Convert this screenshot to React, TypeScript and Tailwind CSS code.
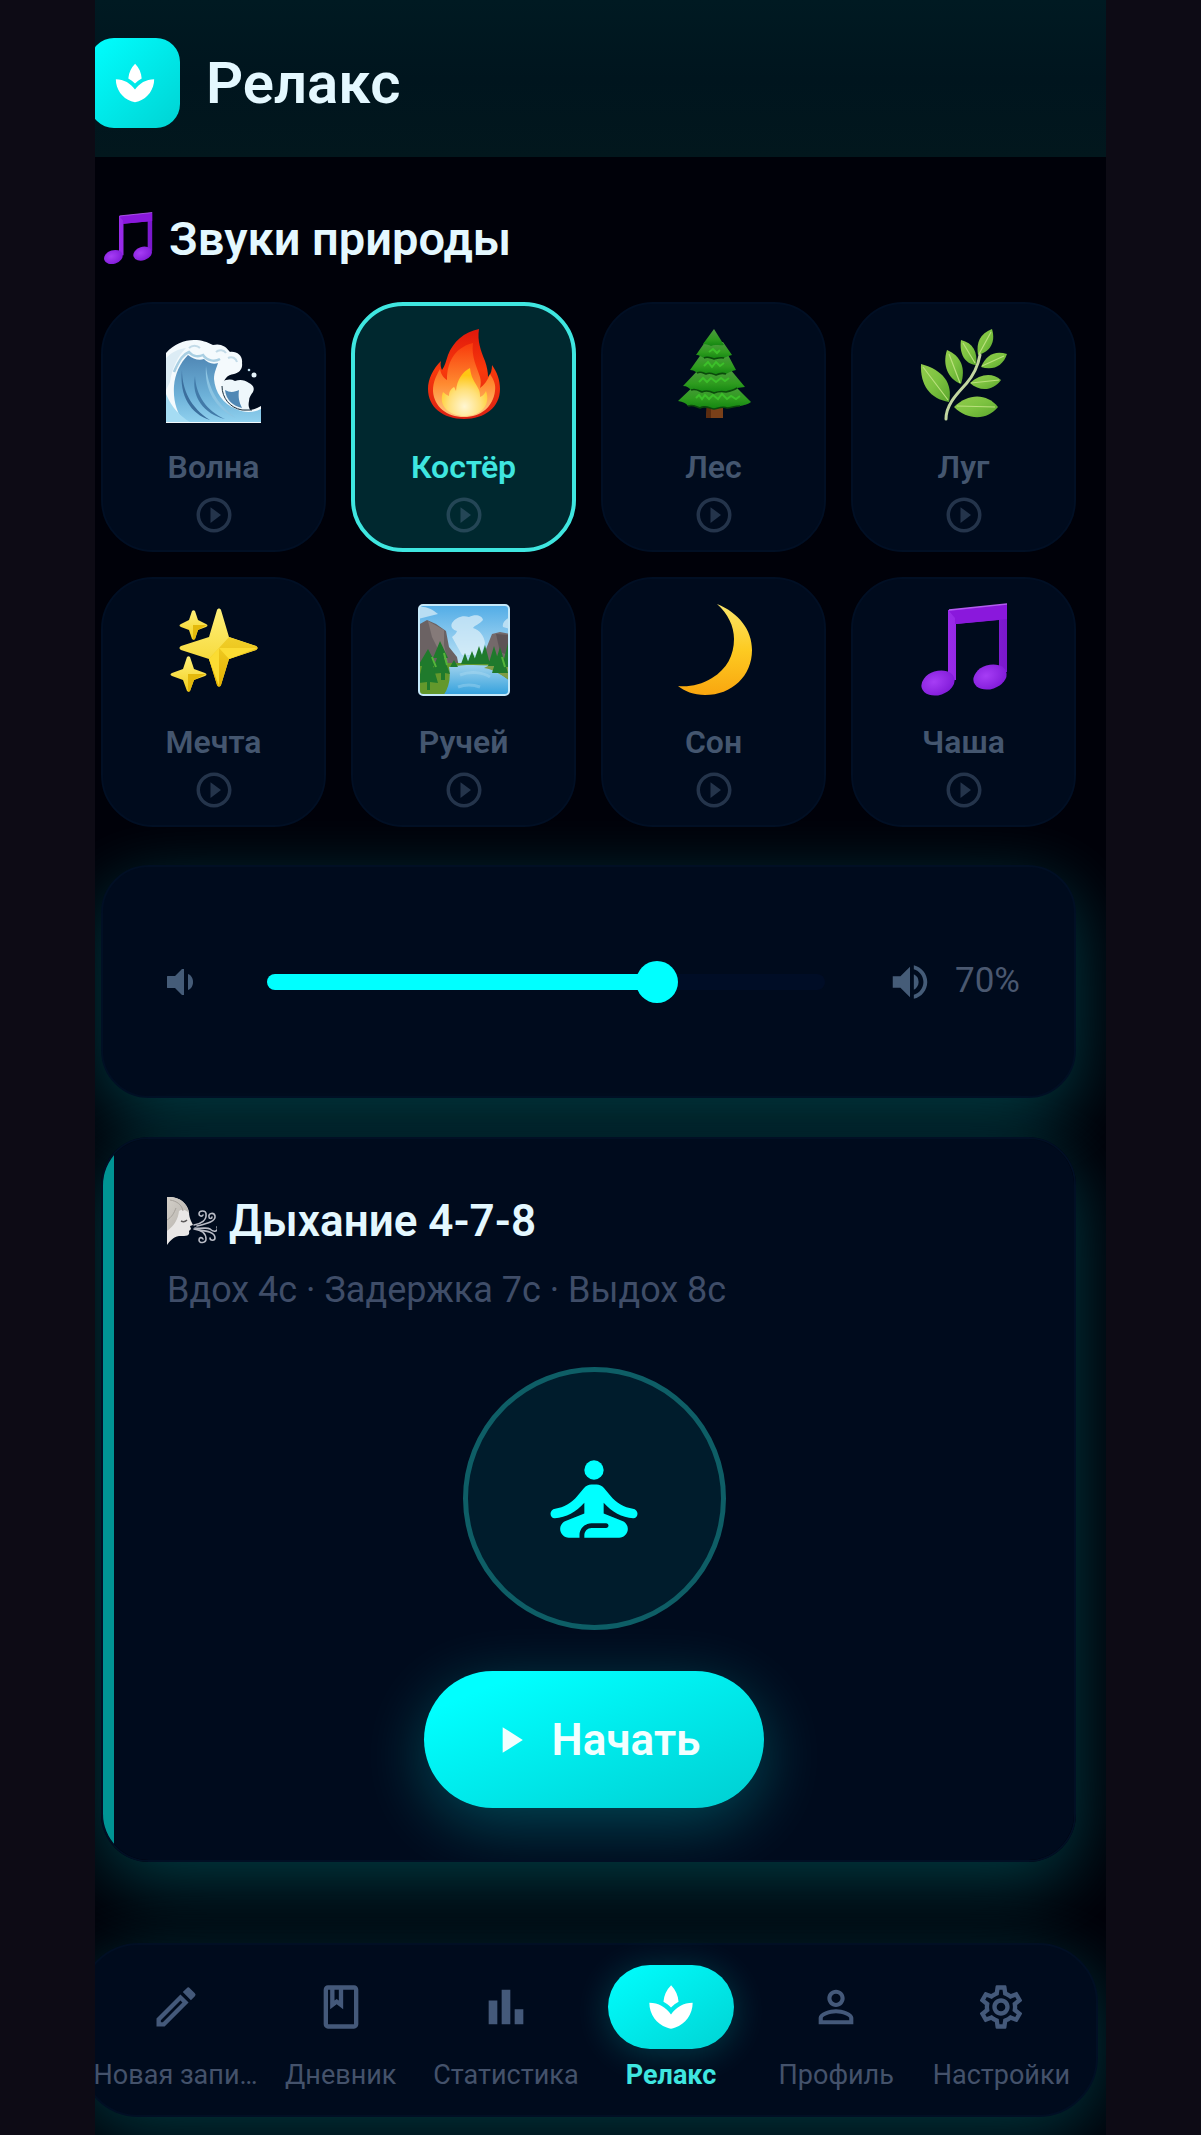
import React, { useState } from 'react';
import {
  MdOutlineBook,
  MdOutlineModeEdit,
  MdOutlineSettings,
  MdPersonOutline,
  MdPlayArrow,
  MdPlayCircleOutline,
  MdSpa,
  MdVolumeUp,
} from 'react-icons/md';
import clsx from 'clsx';

interface IconProps {
  className?: string;
}

const WaveIcon: React.FC<IconProps> = ({ className }) => (
  <svg viewBox="0 0 96 96" className={className} aria-hidden="true">
    <defs>
      <linearGradient id="wave-body" x1="0" y1="0" x2="0" y2="1">
        <stop offset="0" stopColor="#4f86b4" />
        <stop offset="0.6" stopColor="#6db1d8" />
        <stop offset="1" stopColor="#8fd0ee" />
      </linearGradient>
    </defs>
    <path
      d="M0 25C8 16 18 12 28 12c8 0 13 2 19 5 7-2 13 1 17 7 7-1 13 4 12 11 1 6-3 10-8 11-7 1-10 5-11 11 0 12 8 22 20 25 7 1 13-1 18-4v17H0z"
      fill="#f4fafd"
    />
    <path
      d="M22 27c-8 8-13 19-14 31-1 15 3 27 10 36h77V81c-8 4-17 4-25 0-13-5-21-17-22-30 0-7 3-12 4-16-6 2-11-1-14-4-5 2-11 0-16-4z"
      fill="url(#wave-body)"
    />
    <path d="M8 44C14 30 18 26 23 24c4 5 10 5 14 3 4 6 12 7 17 4" fill="none" stroke="#a9cfe3" strokeWidth="2.5" />
    <path d="M16 42c0 20 9 38 28 50-19-6-31-24-28-50z" fill="#3c6f9d" />
    <path d="M29 48c1 20 12 35 30 43-21-5-34-22-30-43z" fill="#427aa8" />
    <path d="M40 38c2 20 10 38 30 52-20-9-32-28-30-52z" fill="#8cc4e2" />
    <path d="M0 66c6 14 14 22 24 28H0z" fill="#a5dcf3" />
    <path d="M0 30c6-6 12-9 20-10C12 28 6 40 4 54L0 62z" fill="#dcecf5" />
    <path
      d="M56 54c5-3 9-3 13-1 5-2 10-1 14 2 4 2 6 5 4 9-2 3-4 5-4 9-1 5 0 7 2 10-10 0-20-4-25-12-3-5-4-11-4-17z"
      fill="#eef7fb"
    />
    <path d="M59 62c5 3 10 2 14 0-1 7 0 12 3 18-9-2-16-8-17-18z" fill="#4f88b5" />
    <path d="M56 58c0 12 8 22 20 24h10" fill="none" stroke="#172d3c" strokeWidth="1" />
    <circle cx="88" cy="47" r="2.5" fill="#e5f3fa" />
    <circle cx="83" cy="42" r="1.3" fill="#bfe0ef" />
    <path d="M62 30c4-2 8 0 9 4M34 20c-3-3-8-3-11 0M50 24c3-3 8-2 10 1" fill="none" stroke="#c3dbe8" strokeWidth="2" />
  </svg>
);

const FireIcon: React.FC<IconProps> = ({ className }) => (
  <svg viewBox="0 0 96 96" className={className} aria-hidden="true">
    <defs>
      <linearGradient id="fire-outer" x1="0" y1="0" x2="0" y2="1">
        <stop offset="0" stopColor="#e0170b" />
        <stop offset="0.45" stopColor="#f8390c" />
        <stop offset="1" stopColor="#dc2013" />
      </linearGradient>
      <linearGradient id="fire-middle" x1="0" y1="0" x2="0" y2="1">
        <stop offset="0" stopColor="#f83a0c" />
        <stop offset="0.55" stopColor="#ff8a30" />
        <stop offset="1" stopColor="#ffc680" />
      </linearGradient>
      <radialGradient id="fire-core" cx="0.5" cy="0.8" r="0.65">
        <stop offset="0" stopColor="#fff6d2" />
        <stop offset="0.55" stopColor="#ffe07a" />
        <stop offset="1" stopColor="#ffc613" />
      </radialGradient>
    </defs>
    <path
      d="M63 1c-2 12 2 22 6 32 2 6 3 11 3 16 3-3 4-7 4-12 5 7 8 15 8 24 0 18-15 30-36 30S12 79 12 61c0-10 5-20 13-28-1 4 0 7 1 9 3-4 4-9 6-15C37 14 48 4 63 1z"
      fill="url(#fire-outer)"
    />
    <path
      d="M57 15c-2 14 4 24 7 34 1 4 1 7 0 11 4-3 8-8 10-14 4 6 6 11 5 17-2 16-14 26-31 26S18 79 17 63c0-9 3-15 7-22 1 6 4 9 7 11 0-16 6-32 26-37z"
      fill="url(#fire-middle)"
    />
    <path
      d="M54 40c1 10 5 14 8 20 2 3 2 6 2 9 3-1 5-4 6-6 5 14-5 25-21 25S22 78 27 64c2 2 4 3 6 4 0-5 2-7 5-9 1 1 1 2 2 4 1-11 6-19 14-23z"
      fill="url(#fire-core)"
    />
  </svg>
);

const TreeIcon: React.FC<IconProps> = ({ className }) => (
  <svg viewBox="0 0 96 96" className={className} aria-hidden="true">
    <defs>
      <linearGradient id="tree-tier" x1="0" y1="0" x2="0" y2="1">
        <stop offset="0" stopColor="#4f9a42" />
        <stop offset="0.6" stopColor="#2f9c1f" />
        <stop offset="1" stopColor="#128510" />
      </linearGradient>
    </defs>
    <path d="M41 76h16v14H40z" fill="#7a4019" />
    <path d="M41 77h4v13h-5z" fill="#5b2c10" />
    <path d="M31 55L12 73c5 1 8 2 10 5 5-2 8 1 12 2 5-3 9 0 14 1 5-1 9-3 13-1 4 0 8-2 13-2 4-1 7-1 11-4L66 55z" fill="url(#tree-tier)" />
    <path d="M33 41L17 58c4 0 6 2 8 4 5-2 8 1 11 2 4-2 8-1 12 1 5-2 8-2 12-1 5-1 8-2 11-4 3 0 5-1 8-1L64 41z" fill="url(#tree-tier)" />
    <path d="M36 25L24 42c3 0 5 1 7 3 4-2 6 0 9 1 4-2 7 0 10 1 4-2 7-2 10-1 3-2 6-3 10-4L61 25z" fill="url(#tree-tier)" />
    <path d="M39 14L30 27c4 0 5 2 8 3 4-2 6 0 10 1 4-1 6-2 10-1 2-1 4-2 8-3L57 14z" fill="url(#tree-tier)" />
    <path d="M48 1L37 16c4 0 6 1 8 2 4-2 8 0 13-1z" fill="url(#tree-tier)" />
    <path
      d="M25 62c5-2 8 1 11 2 4-2 8-1 12 1 5-2 8-2 12-1 5-1 8-2 11-4M31 45c4-2 6 0 9 1 4-2 7 0 10 1 4-2 7-2 10-1M38 30c4-2 6 0 10 1 4-1 6-2 10-1M22 78c5-2 8 1 12 2 5-3 9 0 14 1 5-1 9-3 13-1 4 0 8-2 13-2"
      fill="none"
      stroke="#0a4a0b"
      strokeWidth="1.6"
    />
    <path
      d="M30 70l3-3 3 4 3-4 4 4 4-4 5 4 4-5 5 5 4-3 5 3 4-3M33 54l4-4 4 4 4-4 5 4 5-4 4 3 4-3M38 38l4-4 4 5 4-5 4 4 4-3M43 24l4-3 4 4 3-3"
      fill="none"
      stroke="#3cc02a"
      strokeWidth="2"
    />
  </svg>
);

const HerbIcon: React.FC<IconProps> = ({ className }) => (
  <svg viewBox="0 0 96 96" className={className} aria-hidden="true">
    <defs>
      <linearGradient id="herb-leaf" x1="0" y1="0" x2="1" y2="1">
        <stop offset="0" stopColor="#93cc4c" />
        <stop offset="0.5" stopColor="#7cc240" />
        <stop offset="1" stopColor="#5aa62c" />
      </linearGradient>
    </defs>
    <g fill="url(#herb-leaf)">
      <path d="M76 1C64 6 60 14 62 27c12-3 18-13 14-26z" />
      <path d="M45 12c12 3 17 12 15 25-11-1-17-11-15-25z" />
      <path d="M91 26c-12-4-21 1-26 13 12 4 22-1 26-13z" />
      <path d="M31 22c14 6 19 18 14 34-13-5-19-19-14-34z" />
      <path d="M85 52c-9-8-21-6-31 3 10 9 23 8 31-3z" />
      <path d="M5 36c22 6 32 19 28 38C14 71 4 57 5 36z" />
      <path d="M82 79c-11-14-30-14-44 0 14 14 34 13 44 0z" />
    </g>
    <path d="M30 91c0-14 10-24 20-35 7-8 12-18 14-29" fill="none" stroke="#c2d6a0" strokeWidth="3" strokeLinecap="round" />
    <path
      d="M7 39l25 33M33 26l11 29M47 15l12 20M75 4L63 26M88 28L66 38M83 52l-28 3M79 79l-38-1"
      fill="none"
      stroke="#b9e07c"
      strokeWidth="1.2"
    />
  </svg>
);

const SparklesIcon: React.FC<IconProps> = ({ className }) => (
  <svg viewBox="0 0 96 96" className={className} aria-hidden="true">
    <defs>
      <linearGradient id="sparkle-light" x1="0" y1="0" x2="0" y2="1">
        <stop offset="0" stopColor="#fff07a" />
        <stop offset="1" stopColor="#f2cf1d" />
      </linearGradient>
      <linearGradient id="sparkle-dark" x1="0" y1="0" x2="0" y2="1">
        <stop offset="0" stopColor="#f0cf2a" />
        <stop offset="1" stopColor="#e5b100" />
      </linearGradient>
    </defs>
    <path
      d="M51 7c1-2 3-2 4 0l8 27 27 9c2 1 2 3 0 4l-27 9-8 26c-1 2-3 2-4 0l-8-26-28-9c-2-1-2-3 0-4l28-9z"
      fill="url(#sparkle-light)"
    />
    <path d="M53 45l10-11 27 9c2 1 2 3 0 4l-27 9-8 26c-1 2-3 2-4 0l-8-26 10-11z" fill="url(#sparkle-dark)" />
    <path d="M53 45h38l-28 11zM53 45v38l-10-27z" fill="#fbdc33" />
    <path d="M26 8c1-1 2-1 3 0l3 9 8 4c2 1 2 2 0 3l-8 3-3 9c-1 1-2 1-3 0l-3-9-8-3c-2-1-2-2 0-3l8-4z" fill="url(#sparkle-light)" />
    <path d="M27 22l14 0-9 5-3 9c-1 1-2 1-2 0z" fill="#e4b90c" />
    <path d="M21 54c1-1 2-1 3 0l4 12 11 4c2 1 2 2 0 3l-11 4-4 11c-1 1-2 1-3 0l-4-11-11-4c-2-1-2-2 0-3l11-4z" fill="url(#sparkle-light)" />
    <path d="M22 71l18 0-12 6-4 11c-1 1-2 1-2 0z" fill="#e4b90c" />
  </svg>
);

const LandscapeIcon: React.FC<IconProps> = ({ className }) => (
  <svg viewBox="0 0 96 96" className={className} aria-hidden="true">
    <defs>
      <linearGradient id="landscape-sky" x1="0" y1="0" x2="0" y2="1">
        <stop offset="0" stopColor="#4fabe6" />
        <stop offset="1" stopColor="#c4e6f6" />
      </linearGradient>
      <linearGradient id="landscape-lake" x1="0" y1="0" x2="0" y2="1">
        <stop offset="0" stopColor="#9fd2ee" />
        <stop offset="1" stopColor="#2f9fdc" />
      </linearGradient>
      <clipPath id="landscape-frame">
        <rect x="3" y="2" width="90" height="90" rx="4" />
      </clipPath>
    </defs>
    <g clipPath="url(#landscape-frame)">
      <rect x="2" y="1" width="92" height="62" fill="url(#landscape-sky)" />
      <path
        d="M36 20c4-6 11-8 17-6 6-3 13-2 14 3-3 4-8 5-10 8 7 2 11 8 12 15l-4 12H46L36 34c2-2 4-3 5-6-4-1-7-4-5-8z"
        fill="#dff1fa"
        opacity="0.7"
      />
      <path d="M2 4c8-1 14 2 20 7L2 16zM94 14c-6 3-8 7-7 10l7 2z" fill="#b9def3" />
      <path d="M2 22l9-5 9 4 10 7 3 16 8 10 2 10H2z" fill="#6b6263" />
      <path d="M12 18l4 16 8 16 8 10-4-18 0-15z" fill="#857a79" />
      <path d="M70 46l6-15 8-2 10 2v28H70z" fill="#74696a" />
      <path d="M80 31l4 18 10 4V32z" fill="#5d5457" />
      <rect x="2" y="60" width="92" height="34" fill="#63982c" />
      <path d="M33 64c16-3 36-2 58 0l-8 6 11 8v15H27c6-8 8-18 6-29z" fill="url(#landscape-lake)" />
      <path d="M68 65c8 1 14 5 26 12V62H74z" fill="#7f9c45" />
      <g fill="#1f7a2c">
        <path d="M24 38l8 17-4 0 6 16-5-1v7h-4v-7l-10 1 6-16h-4z" />
        <path d="M12 46l9 17h-4l5 17-8-1v8h-3v-8l-9 1 4-17H2z" />
        <path d="M49 50l4 11h-8zM56 48l5 13H51zM63 43l6 18H57zM69 42l5 19H63zM78 43l6 20H72zM84 44l8 26H76zM92 40l6 24H86zM38 57l4 7h-8z" />
      </g>
      <path d="M16 54l4 10M28 50l3 12M86 54l3 10" stroke="#55b53a" strokeWidth="2" />
      <path d="M44 72c10-4 22-3 30 2M42 84c8-3 14-3 22 0" fill="none" stroke="#bfe4f6" strokeWidth="3" opacity="0.3" />
    </g>
    <rect x="3" y="2" width="90" height="90" rx="4" fill="none" stroke="#c5e9fa" strokeWidth="2" />
  </svg>
);

const MoonIcon: React.FC<IconProps> = ({ className }) => (
  <svg viewBox="0 0 96 96" className={className} aria-hidden="true">
    <defs>
      <linearGradient id="moon-fill" x1="0" y1="0" x2="0" y2="1">
        <stop offset="0" stopColor="#fbe56a" />
        <stop offset="0.5" stopColor="#fdcb22" />
        <stop offset="1" stopColor="#f9a60f" />
      </linearGradient>
    </defs>
    <path
      d="M51 1c22 9 35 26 35 46 0 26-20 45-47 45-11 0-21-4-27-9 11 1 23-1 34-8 15-9 22-23 22-39 0-13-6-25-17-35z"
      fill="url(#moon-fill)"
    />
  </svg>
);

const NotesIcon: React.FC<IconProps & { id: string }> = ({ className, id }) => (
  <svg viewBox="0 0 96 96" className={className} aria-hidden="true">
    <defs>
      <linearGradient id={`${id}-stem`} x1="0" y1="0" x2="1" y2="0">
        <stop offset="0" stopColor="#9a2bea" />
        <stop offset="1" stopColor="#7a18cc" />
      </linearGradient>
      <radialGradient id={`${id}-head`} cx="0.4" cy="0.4" r="0.7">
        <stop offset="0" stopColor="#a63df5" />
        <stop offset="1" stopColor="#7e18d6" />
      </radialGradient>
    </defs>
    <path d="M32 7L91 1v68h-8V17l-43 4v56h-8z" fill={`url(#${id}-stem)`} />
    <path d="M33 8L91 2v14l-52 5v-6z" fill="#8a18dc" />
    <path d="M33 7l58-6" stroke="#b35cf0" strokeWidth="1.5" />
    <ellipse cx="22" cy="80" rx="17" ry="12" transform="rotate(-18 22 80)" fill={`url(#${id}-head)`} />
    <ellipse cx="74" cy="74" rx="17" ry="12" transform="rotate(-18 74 74)" fill={`url(#${id}-head)`} />
  </svg>
);

const BreathIcon: React.FC<IconProps> = ({ className }) => (
  <svg viewBox="0 0 50 50" className={className} aria-hidden="true">
    <defs>
      <linearGradient id="breath-hair" x1="0" y1="0" x2="1" y2="1">
        <stop offset="0" stopColor="#d3cfc8" />
        <stop offset="1" stopColor="#b5b1ac" />
      </linearGradient>
    </defs>
    <path d="M0 1c10-1 20 5 22 15 0 4 1 6 2 9l2 4-3 1 1 3-2 2c1 5-2 5-10 5-6 1-9 5-12 9z" fill="#e9e7e6" />
    <path d="M0 1c12-1 21 6 22 16-4-4-7-4-10-2-1 8-4 14-12 20z" fill="url(#breath-hair)" />
    <path d="M3 4c7 1 12 5 13 11M0 24c5-3 7-7 9-12" fill="none" stroke="#a5a19b" />
    <path d="M14 25c2 1 4 1 6-1" fill="none" stroke="#5d5a5a" strokeWidth="1.5" />
    <g fill="none" stroke="#b9bcc6" strokeWidth="1.6" strokeLinecap="round">
      <path d="M27 29c7-1 13-5 12-11 0-4-7-4-7 0 0 2 3 3 4 1" />
      <path d="M30 30c8-2 19-4 18-10-1-4-7-3-6 1 0 2 3 2 3 0" />
      <path d="M28 32c8 1 12-1 15 1 4 4 9 2 7-2" />
      <path d="M27 33c7 1 12 4 12 10 0 4-7 5-7 1 0-3 3-3 4-1" />
      <path d="M32 34c7 1 16 2 16 8 0 3-5 3-5 0" />
    </g>
  </svg>
);

const VolumeLowIcon: React.FC<IconProps> = ({ className }) => (
  <svg viewBox="0 0 26 26" className={className} fill="currentColor" aria-hidden="true">
    <path d="M1 7h7l7-7h2v26h-2l-7-7H1c-1 0-1 0-1-1V8c0-1 0-1 1-1z" />
    <path d="M21 5c3 1 5 4 5 8s-2 7-5 8z" />
  </svg>
);

const LotusPoseIcon: React.FC<IconProps> = ({ className }) => (
  <svg viewBox="0 0 24 24" className={className} fill="currentColor" aria-hidden="true">
    <circle cx="12" cy="6" r="2" />
    <path d="M20.1 15.98c.5.03.9-.4.9-.93 0-.52-.4-.98-.95-1.05-1.85-.25-3.35-1.12-4.65-2.68l-1.34-1.6c-.38-.46-.94-.72-1.53-.72h-1.05c-.6 0-1.16.26-1.54.72l-1.34 1.6C7.3 12.88 5.8 13.75 3.95 14c-.55.07-.95.53-.95 1.05 0 .53.4.96.9.93 2.35-.2 4.4-1.28 6.1-3.23V15l-3.88 1.55C5.44 16.82 5 17.48 5 18.21 5 19.2 5.8 20 6.79 20H9v-.5c0-1.38 1.12-2.5 2.5-2.5h3c.28 0 .5.22.5.5s-.22.5-.5.5h-3c-.83 0-1.5.67-1.5 1.5v.5h7.21c.99 0 1.79-.8 1.79-1.79 0-.73-.44-1.39-1.12-1.66L14 15v-2.25c1.7 1.95 3.75 3.03 6.1 3.23z" />
  </svg>
);

const ChartIcon: React.FC<IconProps> = ({ className }) => (
  <svg viewBox="0 0 24 24" className={className} fill="currentColor" aria-hidden="true">
    <path d="M4 9h4v11H4zM10 4h4v16h-4zM16 13h4v7h-4z" />
  </svg>
);

interface Sound {
  id: string;
  label: string;
  icon: React.ReactNode;
}

const EMOJI_CLASS = 'size-24';

const SOUNDS: Sound[] = [
  { id: 'wave', label: 'Волна', icon: <WaveIcon className={EMOJI_CLASS} /> },
  { id: 'fire', label: 'Костёр', icon: <FireIcon className={EMOJI_CLASS} /> },
  { id: 'forest', label: 'Лес', icon: <TreeIcon className={EMOJI_CLASS} /> },
  { id: 'meadow', label: 'Луг', icon: <HerbIcon className={EMOJI_CLASS} /> },
  { id: 'dream', label: 'Мечта', icon: <SparklesIcon className={EMOJI_CLASS} /> },
  { id: 'stream', label: 'Ручей', icon: <LandscapeIcon className={EMOJI_CLASS} /> },
  { id: 'sleep', label: 'Сон', icon: <MoonIcon className={EMOJI_CLASS} /> },
  { id: 'bowl', label: 'Чаша', icon: <NotesIcon id="bowl" className={EMOJI_CLASS} /> },
];

const NAV_ICON_CLASS = 'size-[52px]';

const NAV_ITEMS = [
  { id: 'new', label: 'Новая запи…', icon: <MdOutlineModeEdit className={NAV_ICON_CLASS} /> },
  { id: 'diary', label: 'Дневник', icon: <MdOutlineBook className={NAV_ICON_CLASS} /> },
  { id: 'stats', label: 'Статистика', icon: <ChartIcon className={NAV_ICON_CLASS} /> },
  { id: 'relax', label: 'Релакс', icon: <MdSpa className={NAV_ICON_CLASS} /> },
  { id: 'profile', label: 'Профиль', icon: <MdPersonOutline className={NAV_ICON_CLASS} /> },
  { id: 'settings', label: 'Настройки', icon: <MdOutlineSettings className={NAV_ICON_CLASS} /> },
];

interface SoundCardProps {
  sound: Sound;
  active: boolean;
  onSelect: () => void;
}

const SoundCard: React.FC<SoundCardProps> = ({ sound, active, onSelect }) => (
  <button
    type="button"
    aria-pressed={active}
    onClick={onSelect}
    className={clsx(
      'flex h-[250px] flex-col items-center rounded-[52px]',
      active ? 'border-4 border-[#3fe6e0] bg-[#00282f] pt-[22px]' : 'border-2 border-[#010f24] bg-[#000b1d] pt-6'
    )}
  >
    {sound.icon}
    <span
      className={clsx(
        'mt-[23px] text-[32px] leading-10 font-semibold',
        active ? 'text-[#3fe6e0]' : 'text-[#44566f]'
      )}
    >
      {sound.label}
    </span>
    <MdPlayCircleOutline className="mt-[7px] size-[42px] text-[#5a7290]/40" />
  </button>
);

const VolumeCard: React.FC = () => {
  const [volume, setVolume] = useState(70);

  return (
    <section className="mt-[38px] flex h-[233px] items-center rounded-[48px] border-2 border-[#010f24] bg-[#000b1d] pr-[54px] pl-16 text-[#455c78] shadow-[0_20px_72px_rgba(0,255,255,0.24)]">
      <VolumeLowIcon className="size-[26px] shrink-0" />
      <div className="relative mr-[62px] ml-[74px] flex h-[42px] flex-1 items-center">
        <div className="h-4 w-full rounded-full bg-[#000d26]">
          <div className="h-full rounded-full bg-[#00ffff]" style={{ width: `${volume}%` }} />
        </div>
        <input
          type="range"
          min={0}
          max={100}
          value={volume}
          onChange={(e) => setVolume(Number(e.target.value))}
          aria-label="Громкость"
          className="absolute -inset-x-5 h-[42px] cursor-pointer appearance-none bg-transparent [&::-webkit-slider-thumb]:size-[42px] [&::-webkit-slider-thumb]:appearance-none [&::-webkit-slider-thumb]:rounded-full [&::-webkit-slider-thumb]:bg-[#00ffff]"
        />
      </div>
      <MdVolumeUp className="size-[46px] shrink-0" />
      <span className="ml-[22px] text-[35px] text-[#4a5870]">{volume}%</span>
    </section>
  );
};

const BreathingCard: React.FC = () => (
  <section className="mt-[39px] overflow-hidden rounded-[48px] border-2 border-[#010f24] shadow-[0_20px_72px_rgba(0,255,255,0.24)]">
    <div className="flex flex-col border-l-[11px] border-[#009494] bg-[#000b1d] px-[53px] py-[52px]">
      <h2 className="flex items-center gap-3 text-[44px] leading-[60px] font-semibold text-[#e4f8ff]">
        <BreathIcon className="size-[50px]" />
        Дыхание 4-7-8
      </h2>
      <p className="mt-[15px] text-[36px] leading-[48px] text-[#3f4d68]">Вдох 4с · Задержка 7с · Выдох 8с</p>
      <div className="mt-[53px] flex size-[263px] items-center justify-center self-center rounded-full border-[5px] border-[#0e5e66] bg-[#001c2c]">
        <LotusPoseIcon className="size-[116px] text-[#00ffff]" />
      </div>
      <button
        type="button"
        className="mt-[41px] flex h-[137px] w-[340px] items-center justify-center gap-5 self-center rounded-full bg-linear-to-br from-[#00ffff] from-15% to-[#00ced1] text-[44px] font-semibold text-[#f2ffff] shadow-[0_16px_64px_rgba(0,255,255,0.25)]"
      >
        <MdPlayArrow className="size-11" />
        Начать
      </button>
    </div>
  </section>
);

const App: React.FC = () => {
  const [activeSound, setActiveSound] = useState('fire');
  const [activeTab, setActiveTab] = useState('relax');

  return (
    <div className="min-h-screen bg-[#0d0b15] px-[95px] font-[Roboto,sans-serif]">
      <div className="flex min-h-screen flex-col overflow-hidden bg-[#000109]">
        <header className="relative z-10 -ml-[5px] flex h-[157px] items-center bg-linear-to-b from-[#001a22] via-[#00151e] to-[#02171d] pt-2">
          <div className="flex size-[90px] items-center justify-center rounded-3xl bg-linear-to-br from-[#00ffff] to-[#00d3d3] text-white">
            <MdSpa className="size-[46px]" />
          </div>
          <h1 className="ml-[26px] text-[58px] leading-none font-semibold text-[#e4f8ff]">Релакс</h1>
        </header>

        <main className="pr-[30px] pl-1.5">
          <h2 className="mt-[52px] flex items-center gap-3.5 text-[47px] leading-[60px] font-semibold text-[#e4f8ff]">
            <NotesIcon id="heading" className="size-[54px]" />
            Звуки природы
          </h2>
          <div className="mt-[33px] grid grid-cols-4 gap-[25px]">
            {SOUNDS.map((sound) => (
              <SoundCard
                key={sound.id}
                sound={sound}
                active={sound.id === activeSound}
                onSelect={() => setActiveSound(sound.id)}
              />
            ))}
          </div>
          <VolumeCard />
          <BreathingCard />
        </main>

        <nav className="mt-[81px] mr-2 mb-[17px] -ml-4 grid grid-cols-6 rounded-[60px] border-2 border-[#010f24] bg-[#000b1d] px-3 pt-5 pb-6 shadow-[0_16px_72px_rgba(0,255,255,0.22)]">
          {NAV_ITEMS.map((item) => {
            const active = item.id === activeTab;
            return (
              <button
                key={item.id}
                type="button"
                aria-current={active ? 'page' : undefined}
                onClick={() => setActiveTab(item.id)}
                className="flex flex-col items-center"
              >
                <span
                  className={clsx(
                    'flex h-[84px] w-[126px] items-center justify-center rounded-full',
                    active
                      ? 'bg-linear-to-br from-[#00ffff] to-[#00d3d3] text-white shadow-[0_4px_36px_rgba(0,255,255,0.2)]'
                      : 'text-[#44597a]'
                  )}
                >
                  {item.icon}
                </span>
                <span
                  className={clsx(
                    'mt-2.5 text-[27px] leading-8 whitespace-nowrap',
                    active ? 'font-bold text-[#3fe6e0]' : 'text-[#44526b]'
                  )}
                >
                  {item.label}
                </span>
              </button>
            );
          })}
        </nav>
      </div>
    </div>
  );
};

export default App;
